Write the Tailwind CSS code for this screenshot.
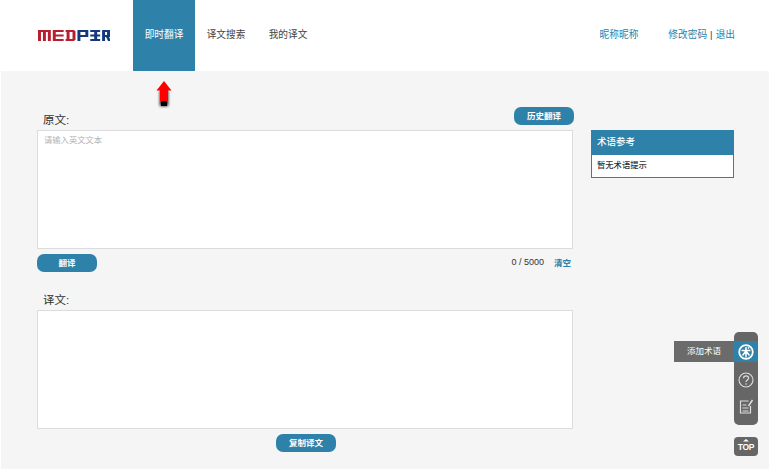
<!DOCTYPE html>
<html lang="zh"><head><meta charset="utf-8"><script src="https://cdn.jsdelivr.net/npm/@tailwindcss/browser@4"></script></head>
<body class="w-[770px] h-[469px] overflow-hidden bg-white font-['Liberation_Sans','Noto_Sans_CJK_SC',sans-serif] text-[9.7px] text-[#444]">
<div class="relative w-[770px] h-[469px]">
<header class="h-[71px] flex items-stretch bg-white">
  <div class="w-[133px] flex items-center pl-[38px] pb-[1px]">
    <svg width="72" height="11" viewBox="0 0 73 11">
      <g fill="#b81f2e"><path d="M0 0h3v11H0zM5 0h3v11H5zM10 0h3v11h-3zM0 0h13v2H0zM15 0h11v2H15zM15 4.500h11v2H15zM15 9h11v2H15zM15 0h3v11h-3zM28 0h9v2h-9zM28 9h9v2h-9zM29 2h3v7h-3zM35 1h3v9h-3z"/></g>
      <g fill="#12397f"><path d="M40 0h10v2H40zM40 5h10v2H40zM40 0h3v11h-3zM48 0h3v7h-3zM53 0h10v2H53zM53 4.500h10v2H53zM53 9h10v2H53zM57 0h3v11h-3zM65 0h8v2h-8zM65 5h8v2h-8zM65 0h3v11h-3zM70 0h3v7h-3zM69 7h3l2 4h-3z"/></g>
    </svg>
  </div>
  <a class="w-[62px] bg-[#2e81a9] text-white flex items-center justify-center">即时翻译</a>
  <a class="w-[62px] flex items-center justify-center">译文搜索</a>
  <a class="w-[62px] flex items-center justify-center">我的译文</a>
  <div class="ml-auto flex items-center pr-[35px] text-[#2e81a9]">
    <span class="mr-[30px]">昵称昵称</span><span>修改密码</span><span class="ml-[3px] mr-[3px] text-[#444]">|</span><span>退出</span>
  </div>
</header>
<main class="h-[398px] mx-[1px] bg-[#f5f5f5] flex pl-[36px] relative">
  <div class="w-[536px] shrink-0 flex flex-col">
    <div class="h-[59px] flex items-end justify-between">
      <span class="text-[11.500px] leading-[18px] pl-[6px] pb-[1px] text-[#333]">原文:</span>
      <button class="w-[60px] h-[18px] mb-[5px] -mr-[1px] rounded-[7px] bg-[#2e81a9] text-white text-[8.500px] font-bold leading-[18px]">历史翻译</button>
    </div>
    <div class="h-[119px] bg-white border border-[#dcdcdc] px-[6px] py-[3px] text-[8.300px] leading-[13px] text-[#b5b5b5]">请输入英文文本</div>
    <div class="h-[50px] flex items-start justify-between pt-[5px]">
      <button class="w-[60px] h-[18px] rounded-[7px] bg-[#2e81a9] text-white text-[8.500px] font-bold leading-[18px]">翻译</button>
      <div class="flex items-center h-[18px] text-[9px] pr-[2px]"><span class="text-[#333]">0 / 5000</span><span class="ml-[10px] text-[8.500px] text-[#2e81a9] font-bold">清空</span></div>
    </div>
    <div class="h-[11px] relative"><span class="absolute left-[6px] -top-[8px] text-[11.500px] leading-[18px] text-[#333]">译文:</span></div>
    <div class="h-[119px] bg-white border border-[#dcdcdc]"></div>
    <div class="flex justify-center pt-[5px] pl-[2px]">
      <button class="w-[60px] h-[18px] rounded-[7px] bg-[#2e81a9] text-white text-[8.500px] font-bold leading-[18px]">复制译文</button>
    </div>
  </div>
  <aside class="ml-[18px] mt-[59px] w-[143px] h-[48px] bg-white border border-[#2e81a9] self-start">
    <div class="h-[25px] -mx-[1px] -mt-[1px] bg-[#2e81a9] text-white text-[9.500px] font-medium pl-[6px] leading-[24px]">术语参考</div>
    <div class="pl-[5px] pt-[3px] text-[8.300px] leading-[14px] font-medium text-[#333]">暂无术语提示</div>
  </aside>
</main>

<svg class="absolute left-[154px] top-[80px]" width="20" height="30" viewBox="0 0 20 30">
  <defs><filter id="b" x="-80%" y="-50%" width="260%" height="200%"><feGaussianBlur stdDeviation="1.500"/></filter></defs>
  <path d="M6 10h8v16H6z" fill="#000" filter="url(#b)"/>
  <path d="M10 1l7.500 9.500H14V21H6V10.500H2.500z" fill="#f00"/>
  <path d="M7 22h6v4H7z" fill="#000"/>
</svg>

<div class="absolute left-[674px] top-[341px] w-[60px] h-[21px] bg-[#6b6b6b] text-white text-[8.500px] leading-[21px] pl-[13px]">添加术语</div>
<div class="absolute left-[734px] top-[332px] w-[24px] h-[93px] rounded-[5px] bg-[#666] overflow-hidden flex flex-col items-center">
  <div class="mt-[9px] h-[21px] w-full bg-[#2e81a9] flex items-center justify-center pr-[1px]">
    <svg width="16" height="16" viewBox="0 0 16 16" fill="none" stroke="#fff"><circle cx="8" cy="8" r="6.800" stroke-width="1.800"/><path d="M3.500 6.500h9M8 3v10.500M8 7l-3.500 4.500M8 7l3.500 4.500M10 3.500l1 1" stroke-width="1.500"/></svg>
  </div>
  <div class="mt-[10px] h-[16px] pr-[1px]">
    <svg width="16" height="16" viewBox="0 0 16 16" fill="none" stroke="#ddd"><circle cx="8" cy="8" r="7" stroke-width="1.100"/><path d="M5.500 6.300c0-1.500 1.100-2.500 2.600-2.500s2.500 1 2.500 2.300c0 1.900-2.600 1.900-2.600 4" stroke-width="1.200"/><path d="M8 11.300v1.500" stroke-width="1.200"/></svg>
  </div>
  <div class="mt-[11px] h-[15px]">
    <svg width="15" height="15" viewBox="0 0 15 15" fill="none" stroke="#ddd" stroke-width="1.200"><path d="M9.500 2H1.500v12h10V7"/><path d="M3.500 6h4M3.500 9h6M3.500 12h6"/><path d="M9.500 7L13.500 1" stroke-width="1.500"/></svg>
  </div>
</div>
<div class="absolute left-[734px] top-[437px] w-[24px] h-[19px] rounded-[4px] bg-[#666] flex flex-col items-center text-white">
  <svg class="mt-[2px]" width="8" height="3" viewBox="0 0 8 3"><path d="M4 0L7 2.500H1z" fill="#fff"/></svg>
  <span class="text-[8.500px] leading-[10px] font-bold font-['Liberation_Sans',sans-serif] tracking-[-0.3px]">TOP</span>
</div>
</div>
</body></html>
